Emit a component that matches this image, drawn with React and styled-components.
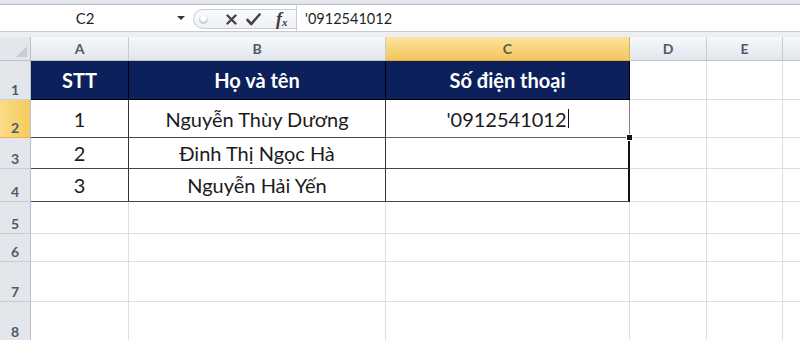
import React from "react";
import styled, { createGlobalStyle, css } from "styled-components";

const Global = createGlobalStyle`
  html, body { margin: 0; padding: 0; background: #ffffff; }
  body { width: 800px; height: 340px; overflow: hidden; font-family: Lato, "Open Sans", sans-serif; }
  * { box-sizing: border-box; }
`;

const Page = styled.div`
  width: 800px;
  height: 340px;
  display: flex;
  flex-direction: column;
  overflow: hidden;
  background: #fff;
`;

const RibbonEdge = styled.div`
  height: 5px;
  background: linear-gradient(#e8ebef, #dde1e6);
  border-bottom: 1px solid #b9c0c9;
  flex: none;
`;

const FormulaBar = styled.div`
  height: 26px;
  display: flex;
  align-items: stretch;
  background: #fff;
  flex: none;
`;

const NameBox = styled.div`
  width: 193px;
  display: flex;
  align-items: center;
  flex: none;
`;

const NameText = styled.span`
  width: 170px;
  text-align: center;
  font-size: 15px;
  color: #1f1f1f;
`;

const DropArrow = styled.span`
  width: 0;
  height: 0;
  margin-left: 7px;
  border-left: 4px solid transparent;
  border-right: 4px solid transparent;
  border-top: 4px solid #333;
`;

const FxControls = styled.div`
  width: 103px;
  flex: none;
  display: flex;
  align-items: center;
  margin: 4px 0 2px;
  border: 1px solid #c9ced6;
  border-right: none;
  border-radius: 11px 0 0 11px;
  background: linear-gradient(#fbfbfc, #eef0f3);
  padding-left: 5px;
`;

const Grip = styled.span`
  width: 9px;
  height: 9px;
  border-radius: 50%;
  background: radial-gradient(circle at 50% 35%, #ffffff 0 30%, #cfd4da 60%, #b8bec6 100%);
  margin-right: 14px;
`;

const IconSlot = styled.span`
  display: flex;
  align-items: center;
  justify-content: center;
  width: ${(p) => p.w}px;
`;

const FxText = styled.span`
  font-family: "Liberation Serif", serif;
  font-style: italic;
  font-weight: bold;
  font-size: 18px;
  color: #3a3a3a;
  margin-left: 10px;
  sub {
    font-size: 11px;
    vertical-align: -1px;
  }
`;

const FormulaInput = styled.div`
  flex: 1;
  display: flex;
  align-items: center;
  padding-left: 8px;
  border-left: 1px solid #c9ced6;
  font-size: 14.5px;
  color: #1f1f1f;
`;

const Gap = styled.div`
  height: 6px;
  background: #eceef1;
  border-top: 1px solid #c6ccd4;
  flex: none;
`;

const Sheet = styled.div`
  display: grid;
  width: 859px;
  grid-template-columns: 31px 98px 257px 244px 77px 76px 76px;
  grid-template-rows: 24px 39px 38px 31px 33px 32px 28px 40px 40px;
  flex: none;
`;

const Corner = styled.div`
  position: relative;
  background: #e3e7ec;
  border-right: 1px solid #b7c0cb;
  border-bottom: 1px solid #b7c0cb;
  &::after {
    content: "";
    position: absolute;
    right: 3px;
    bottom: 3px;
    width: 0;
    height: 0;
    border-left: 11px solid transparent;
    border-bottom: 11px solid #c9ced5;
  }
`;

const ColHead = styled.div`
  display: flex;
  align-items: center;
  justify-content: center;
  font-size: 14px;
  font-weight: 700;
  color: #4a5a70;
  background: linear-gradient(#f6f8fa, #e2e6eb);
  border-right: 1px solid #c5cbd3;
  border-bottom: 1px solid #b9c2cd;
  ${(p) =>
    p.active &&
    css`
      background: linear-gradient(#fbe3a0, #f3c65b);
      border-right-color: #e2b04a;
      border-bottom: 1px solid #f0a33a;
      color: #5a5a4a;
    `}
`;

const RowHead = styled.div`
  display: flex;
  align-items: flex-end;
  justify-content: center;
  padding-bottom: 1px;
  font-size: 14px;
  font-weight: 700;
  color: #4a5a70;
  background: #e3e7ec;
  border-right: 1px solid #b7c0cb;
  border-bottom: 1px solid #c7cdd5;
  ${(p) =>
    p.active &&
    css`
      background: linear-gradient(90deg, #fbdc86, #f6ca5d);
      border-bottom-color: #e7b653;
    `}
`;

const Cell = styled.div`
  position: relative;
  display: flex;
  align-items: center;
  justify-content: center;
  font-size: 20px;
  color: #1b1b1b;
  background: #fff;
  border-right: 1px solid #dcdedf;
  border-bottom: 1px solid #dcdedf;
  white-space: nowrap;
  ${(p) =>
    p.kind === "head" &&
    css`
      background: #0c205c;
      color: #ffffff;
      font-weight: 700;
      border-right-color: #000;
      border-bottom-color: #000;
    `}
  ${(p) =>
    p.kind === "body" &&
    css`
      border-right-color: #333;
      border-bottom-color: #444;
    `}
  ${(p) =>
    p.kind === "edit" &&
    css`
      border-right-color: #7c7c7c;
      border-bottom-color: #666;
    `}
  ${(p) =>
    p.kind === "thick" &&
    css`
      border-right: 2px solid #111;
      border-bottom-color: #444;
    `}
`;

const Caret = styled.span`
  display: inline-block;
  width: 1px;
  height: 19px;
  background: #111;
  margin-left: 1px;
`;

const FillHandle = styled.span`
  position: absolute;
  right: -3px;
  bottom: -3px;
  width: 5px;
  height: 5px;
  background: #111;
  outline: 1px solid #fff;
  z-index: 2;
`;

/* F is only partly on screen, its letter lies beyond the right edge */
const cols = [
  { key: "A", label: "A" },
  { key: "B", label: "B" },
  { key: "C", label: "C" },
  { key: "D", label: "D" },
  { key: "E", label: "E" },
  { key: "F", label: "" },
];

const data = [
  ["1", "Nguyễn Thùy Dương"],
  ["2", "Đinh Thị Ngọc Hà"],
  ["3", "Nguyễn Hải Yến"],
];

export default function App() {
  const blanks = (n) =>
    Array.from({ length: n }, (_, i) => <Cell key={"b" + i} />);

  return (
    <Page>
      <Global />
      <RibbonEdge />
      <FormulaBar>
        <NameBox>
          <NameText>C2</NameText>
          <DropArrow />
        </NameBox>
        <FxControls>
          <Grip />
          <IconSlot w={18}>
            <svg width="11" height="11" viewBox="0 0 11 11">
              <path d="M1.5 1.5 L9.5 9.5 M9.5 1.5 L1.5 9.5" stroke="#444" strokeWidth="2.4" strokeLinecap="round" />
            </svg>
          </IconSlot>
          <IconSlot w={26}>
            <svg width="15" height="13" viewBox="0 0 15 13">
              <path d="M1.5 7 L5.3 11 L13.5 1.5" fill="none" stroke="#444" strokeWidth="2.6" strokeLinecap="round" strokeLinejoin="round" />
            </svg>
          </IconSlot>
          <FxText>
            f<sub>x</sub>
          </FxText>
        </FxControls>
        <FormulaInput>'0912541012</FormulaInput>
      </FormulaBar>
      <Gap />
      <Sheet>
        <Corner />
        {cols.map((c) => (
          <ColHead key={c.key} active={c.key === "C"}>
            {c.label}
          </ColHead>
        ))}

        <RowHead>1</RowHead>
        <Cell kind="head">STT</Cell>
        <Cell kind="head">Họ và tên</Cell>
        <Cell kind="head">Số điện thoại</Cell>
        {blanks(3)}

        <RowHead active>2</RowHead>
        <Cell kind="body">{data[0][0]}</Cell>
        <Cell kind="body">{data[0][1]}</Cell>
        <Cell kind="edit">
          <span>'0912541012</span>
          <Caret />
          <FillHandle />
        </Cell>
        {blanks(3)}

        {data.slice(1).map((r, i) => (
          <React.Fragment key={r[0]}>
            <RowHead>{i + 3}</RowHead>
            <Cell kind="body">{r[0]}</Cell>
            <Cell kind="body">{r[1]}</Cell>
            <Cell kind="thick" />
            {blanks(3)}
          </React.Fragment>
        ))}

        {[5, 6, 7, 8].map((n) => (
          <React.Fragment key={n}>
            <RowHead>{n}</RowHead>
            {blanks(6)}
          </React.Fragment>
        ))}
      </Sheet>
    </Page>
  );
}
